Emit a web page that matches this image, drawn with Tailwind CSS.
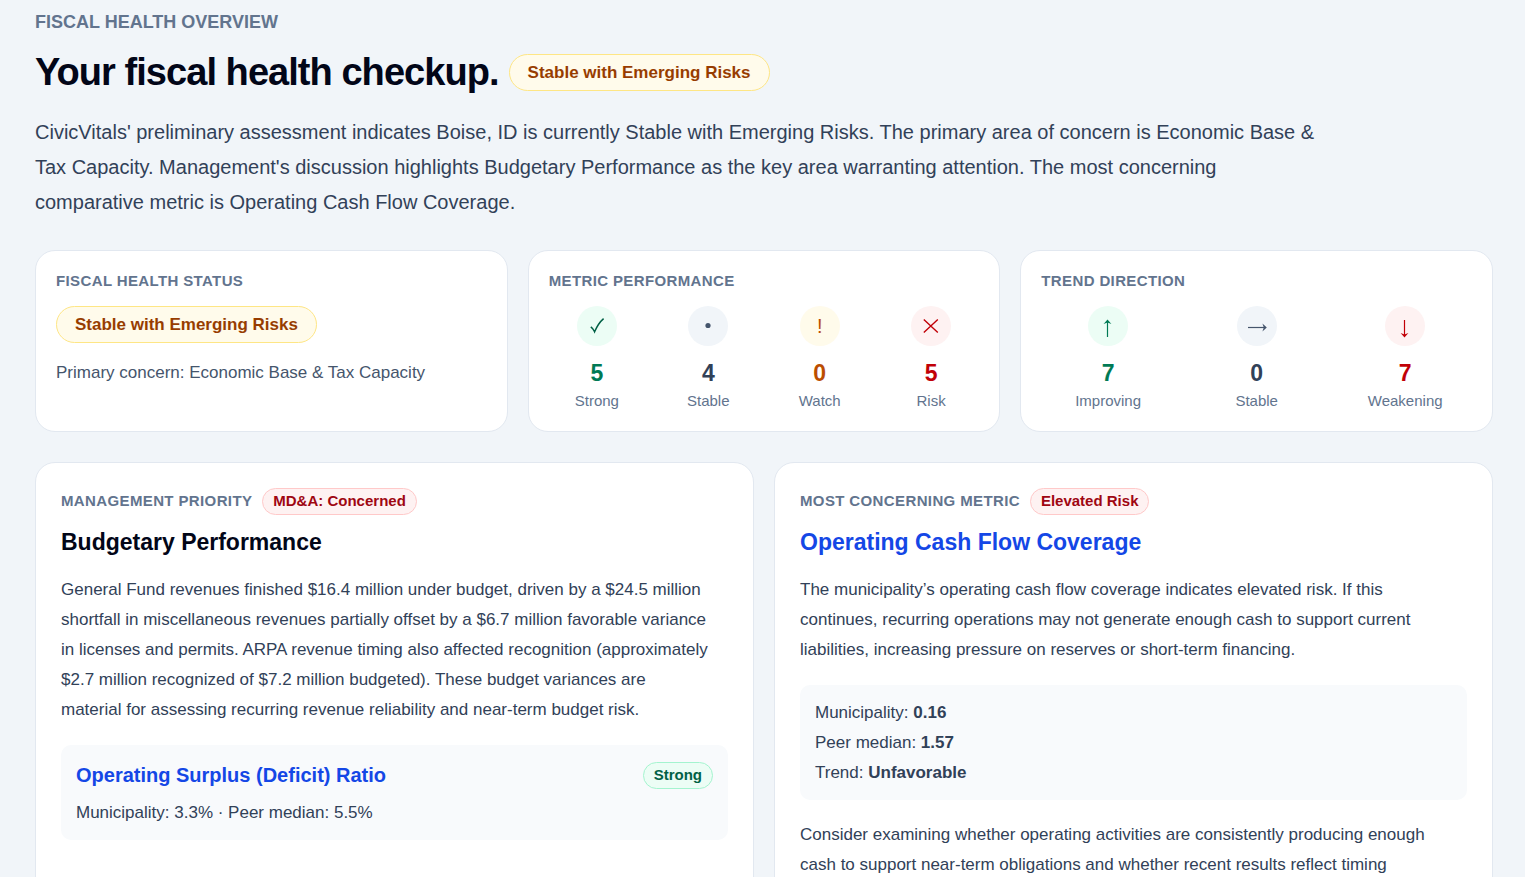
<!DOCTYPE html>
<html lang="en">

<head>
    <meta charset="UTF-8">
    <meta name="viewport" content="width=device-width, initial-scale=1.0">
    <title>Fiscal Health Overview</title>
    <script src="https://cdn.jsdelivr.net/npm/@tailwindcss/browser@4"></script>
</head>

<body class="bg-slate-100 font-['Liberation_Sans',Arial,sans-serif] text-slate-700">
    <main class="h-screen overflow-hidden pt-[10px] pl-[35px] pr-8">
        <header>
            <p class="text-[18px] leading-[25px] font-bold text-slate-500">FISCAL HEALTH OVERVIEW</p>
            <div class="mt-[15px] flex flex-wrap items-center gap-[10px]">
                <h1 class="text-[38px] leading-[45px] font-bold tracking-tight text-slate-950">Your fiscal health checkup.</h1>
                <span class="rounded-full border border-amber-200 bg-amber-50 px-[18px] py-[5px] text-[17px] leading-[25px] font-bold text-amber-800">Stable with Emerging Risks</span>
            </div>
            <p class="mt-5 max-w-[1280px] text-[20px] leading-[35px]">
                CivicVitals' preliminary assessment indicates Boise, ID is currently Stable with Emerging Risks. The
                primary area of concern is Economic Base &amp; Tax Capacity. Management's discussion highlights
                Budgetary Performance as the key area warranting attention. The most concerning comparative metric is
                Operating Cash Flow Coverage.
            </p>
        </header>

        <section class="mt-[30px] grid grid-cols-3 gap-5">
            <div class="rounded-[20px] border border-slate-200 bg-white p-5">
                <h2 class="text-[15px] leading-5 font-bold tracking-wide text-slate-500">FISCAL HEALTH STATUS</h2>
                <div class="mt-[15px] flex">
                    <span class="rounded-full border border-amber-200 bg-amber-50 px-[18px] py-[5px] text-[17px] leading-[25px] font-bold text-amber-800">Stable with Emerging Risks</span>
                </div>
                <p class="mt-[17px] text-[17px] leading-[25px] text-slate-600">Primary concern: Economic Base &amp; Tax Capacity</p>
            </div>

            <div class="rounded-[20px] border border-slate-200 bg-white p-5">
                <h2 class="text-[15px] leading-5 font-bold tracking-wide text-slate-500">METRIC PERFORMANCE</h2>
                <div class="mt-[15px] grid grid-cols-4 gap-[15px]">
                    <div class="flex flex-col items-center">
                        <span class="flex size-10 items-center justify-center rounded-full bg-emerald-50 text-emerald-800">
                            <svg class="size-5" viewBox="0 0 20 20" fill="none" stroke="currentColor" stroke-width="1.5" aria-hidden="true">
                                <path d="M3.8 10.8 C5.6 12 6.8 13.8 7.6 15.8 C9.8 10.6 12.6 6 16.6 2.6" />
                            </svg>
                        </span>
                        <p class="mt-[10px] text-[23px] leading-[35px] font-bold text-emerald-700">5</p>
                        <p class="text-[15px] leading-5 text-slate-500">Strong</p>
                    </div>
                    <div class="flex flex-col items-center">
                        <span class="flex size-10 items-center justify-center rounded-full bg-slate-100 text-slate-600">
                            <svg class="size-5" viewBox="0 0 20 20" fill="currentColor" aria-hidden="true">
                                <circle cx="10" cy="9.5" r="2.6" />
                            </svg>
                        </span>
                        <p class="mt-[10px] text-[23px] leading-[35px] font-bold text-slate-700">4</p>
                        <p class="text-[15px] leading-5 text-slate-500">Stable</p>
                    </div>
                    <div class="flex flex-col items-center">
                        <span class="flex size-10 items-center justify-center rounded-full bg-amber-50 text-[20px] leading-[25px] text-amber-700">!</span>
                        <p class="mt-[10px] text-[23px] leading-[35px] font-bold text-amber-700">0</p>
                        <p class="text-[15px] leading-5 text-slate-500">Watch</p>
                    </div>
                    <div class="flex flex-col items-center">
                        <span class="flex size-10 items-center justify-center rounded-full bg-red-50 text-red-700">
                            <svg class="size-5" viewBox="0 0 20 20" fill="none" stroke="currentColor" stroke-width="1.4" aria-hidden="true">
                                <path d="M2.8 3.6 L16.8 16.6 M16.8 3.6 L2.8 16.6" />
                            </svg>
                        </span>
                        <p class="mt-[10px] text-[23px] leading-[35px] font-bold text-red-700">5</p>
                        <p class="text-[15px] leading-5 text-slate-500">Risk</p>
                    </div>
                </div>
            </div>

            <div class="rounded-[20px] border border-slate-200 bg-white p-5">
                <h2 class="text-[15px] leading-5 font-bold tracking-wide text-slate-500">TREND DIRECTION</h2>
                <div class="mt-[15px] grid grid-cols-3 gap-[15px]">
                    <div class="flex flex-col items-center">
                        <span class="flex size-10 items-center justify-center rounded-full bg-emerald-50 text-emerald-700">
                            <svg class="size-6" viewBox="0 0 24 24" fill="none" stroke="currentColor" stroke-width="1.2" aria-hidden="true">
                                <path d="M11.5 23 V7" />
                                <path d="M11.5 5.5 L15.4 10 L11.5 8.4 L7.6 10 Z" fill="currentColor" stroke="none" />
                            </svg>
                        </span>
                        <p class="mt-[10px] text-[23px] leading-[35px] font-bold text-emerald-700">7</p>
                        <p class="text-[15px] leading-5 text-slate-500">Improving</p>
                    </div>
                    <div class="flex flex-col items-center">
                        <span class="flex size-10 items-center justify-center rounded-full bg-slate-100 text-slate-600">
                            <svg class="size-6" viewBox="0 0 24 24" fill="none" stroke="currentColor" stroke-width="1.2" aria-hidden="true">
                                <path d="M3 13.5 H20" />
                                <path d="M21.8 13.5 L17.4 17.4 L18.8 13.5 L17.4 9.6 Z" fill="currentColor" stroke="none" />
                            </svg>
                        </span>
                        <p class="mt-[10px] text-[23px] leading-[35px] font-bold text-slate-700">0</p>
                        <p class="text-[15px] leading-5 text-slate-500">Stable</p>
                    </div>
                    <div class="flex flex-col items-center">
                        <span class="flex size-10 items-center justify-center rounded-full bg-red-50 text-red-700">
                            <svg class="size-6" viewBox="0 0 24 24" fill="none" stroke="currentColor" stroke-width="1.2" aria-hidden="true">
                                <path d="M11.5 6 V22" />
                                <path d="M11.5 23.5 L15.4 19 L11.5 20.6 L7.6 19 Z" fill="currentColor" stroke="none" />
                            </svg>
                        </span>
                        <p class="mt-[10px] text-[23px] leading-[35px] font-bold text-red-700">7</p>
                        <p class="text-[15px] leading-5 text-slate-500">Weakening</p>
                    </div>
                </div>
            </div>
        </section>

        <section class="mt-[30px] grid grid-cols-2 gap-5">
            <article class="rounded-[20px] border border-slate-200 bg-white p-[25px]">
                <div class="flex items-baseline gap-[10px]">
                    <h2 class="text-[15px] leading-5 font-bold tracking-wide text-slate-500">MANAGEMENT PRIORITY</h2>
                    <span class="rounded-full border border-red-200 bg-red-50 px-[10px] pt-[2px] pb-[3px] text-[15px] leading-5 font-bold text-red-800">MD&amp;A: Concerned</span>
                </div>
                <h3 class="mt-[10px] text-[23px] leading-[35px] font-bold text-slate-950">Budgetary Performance</h3>
                <p class="mt-[15px] max-w-[648px] text-[17px] leading-[30px]">
                    General Fund revenues finished $16.4 million under budget, driven by a $24.5 million shortfall in
                    miscellaneous revenues partially offset by a $6.7 million favorable variance in licenses and
                    permits. ARPA revenue timing also affected recognition (approximately $2.7 million recognized of
                    $7.2 million budgeted). These budget variances are material for assessing recurring revenue
                    reliability and near-term budget risk.
                </p>
                <div class="mt-5 rounded-[10px] bg-slate-50 p-[15px]">
                    <div class="flex items-center justify-between">
                        <a href="#" class="text-[20px] leading-[30px] font-bold text-blue-700">Operating Surplus (Deficit) Ratio</a>
                        <span class="rounded-full border border-emerald-200 bg-emerald-50 px-[10px] pt-[2px] pb-[3px] text-[15px] leading-5 font-bold text-emerald-800">Strong</span>
                    </div>
                    <p class="mt-[10px] text-[17px] leading-[25px]">Municipality: 3.3% · Peer median: 5.5%</p>
                </div>
            </article>

            <article class="rounded-[20px] border border-slate-200 bg-white p-[25px]">
                <div class="flex items-baseline gap-[10px]">
                    <h2 class="text-[15px] leading-5 font-bold tracking-wide text-slate-500">MOST CONCERNING METRIC</h2>
                    <span class="rounded-full border border-red-200 bg-red-50 px-[10px] pt-[2px] pb-[3px] text-[15px] leading-5 font-bold text-red-800">Elevated Risk</span>
                </div>
                <h3 class="mt-[10px] text-[23px] leading-[35px] font-bold text-blue-700"><a href="#">Operating Cash Flow Coverage</a></h3>
                <p class="mt-[15px] max-w-[648px] text-[17px] leading-[30px]">
                    The municipality’s operating cash flow coverage indicates elevated risk. If this continues,
                    recurring operations may not generate enough cash to support current liabilities, increasing
                    pressure on reserves or short-term financing.
                </p>
                <div class="mt-5 space-y-[5px] rounded-[10px] bg-slate-50 p-[15px] text-[17px] leading-[25px]">
                    <p>Municipality: <strong>0.16</strong></p>
                    <p>Peer median: <strong>1.57</strong></p>
                    <p>Trend: <strong>Unfavorable</strong></p>
                </div>
                <p class="mt-5 max-w-[648px] text-[17px] leading-[30px]">
                    Consider examining whether operating activities are consistently producing enough cash to support
                    near-term obligations and whether recent results reflect timing
                </p>
            </article>
        </section>
    </main>
</body>

</html>
